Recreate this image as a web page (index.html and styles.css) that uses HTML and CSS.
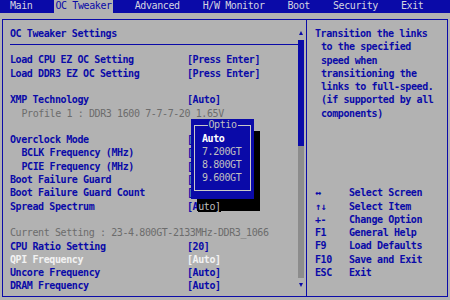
FILE: index.html
```html
<!DOCTYPE html>
<html lang="en">
<head>
  <meta charset="UTF-8">
  <title>OC Tweaker</title>
  <link rel="stylesheet" href="styles.css">
</head>
<body>

  <div class="menubar">
    <span class="tab">Main</span>
    <span class="tab active">OC Tweaker</span>
    <span class="tab">Advanced</span>
    <span class="tab">H/W Monitor</span>
    <span class="tab">Boot</span>
    <span class="tab">Security</span>
    <span class="tab">Exit</span>
  </div>

  <div class="frame">
    <div class="main">
      <div class="settings">
        <div class="title">OC Tweaker Settings</div>
        <div class="rule"></div>

        <div class="row"><span>Load CPU EZ OC Setting</span><span>[Press Enter]</span></div>
        <div class="row"><span>Load DDR3 EZ OC Setting</span><span>[Press Enter]</span></div>
        <div class="blank"></div>
        <div class="row"><span>XMP Technology</span><span>[Auto]</span></div>
        <div class="row info indent"><span>Profile 1 : DDR3 1600 7-7-7-20 1.65V</span></div>
        <div class="blank"></div>
        <!-- values hidden behind the options popup -->
        <div class="row"><span>Overclock Mode</span><span>[</span></div>
        <div class="row indent"><span>BCLK Frequency (MHz)</span><span>[</span></div>
        <div class="row indent"><span>PCIE Frequency (MHz)</span><span>[</span></div>
        <div class="row"><span>Boot Failure Guard</span><span>[</span></div>
        <div class="row"><span>Boot Failure Guard Count</span><span>[</span></div>
        <div class="row"><span>Spread Spectrum</span><span>[A<span class="shade">uto]</span></span></div>
        <div class="blank"></div>
        <div class="row info"><span>Current Setting : 23-4.800GT-2133MHz-DDR3_1066</span></div>
        <div class="row"><span>CPU Ratio Setting</span><span>[20]</span></div>
        <div class="row selected"><span>QPI Frequency</span><span>[Auto]</span></div>
        <div class="row"><span>Uncore Frequency</span><span>[Auto]</span></div>
        <div class="row"><span>DRAM Frequency</span><span>[Auto]</span></div>
      </div>

      <div class="scrollbar">
        <div class="arrow up"></div>
        <div class="thumb"></div>
        <div class="track"></div>
        <div class="arrow down"></div>
      </div>

      <div class="popup">
        <div class="options">
          <span class="options-title">Optio</span>
          <div class="option current">Auto</div>
          <div class="option">7.200GT</div>
          <div class="option">8.800GT</div>
          <div class="option">9.600GT</div>
        </div>
      </div>
    </div>

    <div class="help">
      <div class="help-text">
        <div>Transition the links</div>
        <div class="cont">to the specified</div>
        <div class="cont">speed when</div>
        <div class="cont">transitioning the</div>
        <div class="cont">links to full-speed.</div>
        <div class="cont">(if supported by all</div>
        <div class="cont">components)</div>
      </div>

      <div class="keys">
        <span>↔</span><span>Select Screen</span>
        <span>↑↓</span><span>Select Item</span>
        <span>+-</span><span>Change Option</span>
        <span>F1</span><span>General Help</span>
        <span>F9</span><span>Load Defaults</span>
        <span>F10</span><span>Save and Exit</span>
        <span>ESC</span><span>Exit</span>
      </div>
    </div>
  </div>

</body>
</html>
```

FILE: styles.css
```css
body {
  margin: 0;
  width: 450px;
  height: 300px;
  overflow: hidden;
  background: #b2b2b2;
  color: #0a0aa8;
  font-family: "DejaVu Sans Mono", "Liberation Mono", monospace;
  font-weight: bold;
  font-size: 10px;
  letter-spacing: -0.4px;
  line-height: 13.3px;
}

.menubar {
  display: flex;
  gap: 21px;
  height: 13px;
  padding-left: 9px;
  background: #0a0aa8;
  color: #d4d4e0;
  line-height: 12px;
  font-weight: normal;
}

.tab {
  padding: 0 1px;
}

.tab.active {
  background: #b2b2b2;
  color: #0a0aa8;
}

.frame {
  display: grid;
  grid-template-columns: 304px 1fr;
  box-sizing: border-box;
  height: 278px;
  margin: 6px 2px 0;
  border: 1px solid #0a0aa8;
}

.main {
  position: relative;
  display: flex;
  border-right: 1px solid #0a0aa8;
}

.settings {
  flex: 0 0 295px;
  box-sizing: border-box;
  padding: 7px 0 0 7px;
}

.rule {
  height: 1px;
  margin: 3.7px 0 8.4px;
  background: #0a0aa8;
}

.row {
  display: grid;
  grid-template-columns: 177px auto;
  white-space: pre;
}

.indent > span:first-child {
  padding-left: 11.5px;
}

.info {
  color: #6c6c6c;
  font-weight: normal;
}

.info > span {
  grid-column: 1 / 3;
}

.selected {
  color: #f2f2f2;
}

.blank {
  height: 13.3px;
}

.shade {
  position: relative;
  z-index: 2;
  background: #000;
  color: #bdbdbd;
  font-weight: normal;
}

.scrollbar {
  display: flex;
  flex-direction: column;
  align-items: center;
  width: 6px;
  margin: 11px 0 0 0;
}

.arrow {
  width: 0;
  height: 0;
  border-left: 2.5px solid transparent;
  border-right: 2.5px solid transparent;
}

.arrow.up {
  border-bottom: 4px solid #0a0aa8;
}

.arrow.down {
  margin-top: 5px;
  border-top: 4px solid #0a0aa8;
}

.thumb {
  width: 6px;
  height: 106px;
  margin-top: 5px;
  background: #0a0aa8;
}

.track {
  width: 6px;
  height: 132px;
  background: #8c8c8c;
}

.popup {
  position: absolute;
  left: 188px;
  top: 99px;
  z-index: 1;
  box-sizing: border-box;
  width: 63px;
  height: 80px;
  padding: 6px 3px 8px;
  background: #0a0aa8;
  box-shadow: 6px 12px 0 #000;
}

.options {
  position: relative;
  box-sizing: border-box;
  height: 100%;
  padding: 6.3px 0 0 7px;
  border: 1px solid #c8c8c8;
  color: #c0c0c0;
  font-weight: normal;
  line-height: 13px;
}

.options-title {
  position: absolute;
  top: -7px;
  left: 50%;
  transform: translateX(-50%);
  padding: 0 1px;
  background: #0a0aa8;
  line-height: 12px;
}

.option.current {
  color: #fff;
  font-weight: bold;
}

.help {
  padding: 7px 0 0 8px;
}

.help-text .cont {
  padding-left: 6px;
}

.keys {
  display: grid;
  grid-template-columns: 34px auto;
  margin-top: 66.2px;
}
```
